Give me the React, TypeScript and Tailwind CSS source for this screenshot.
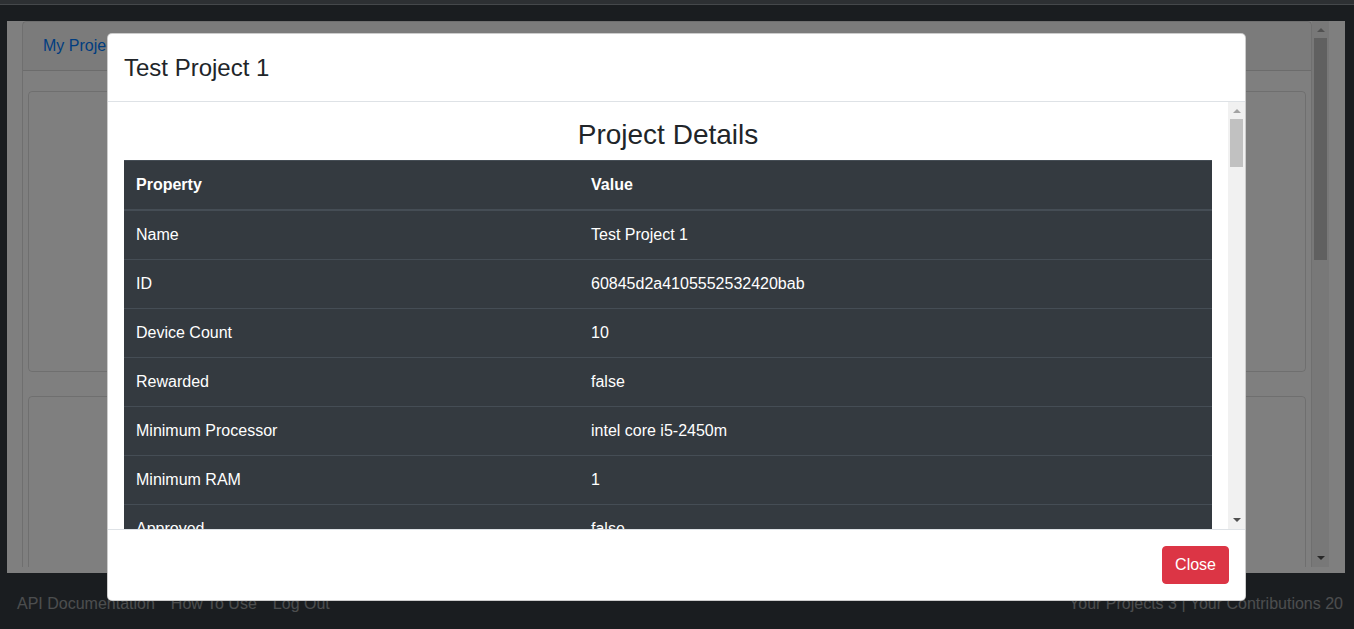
import React from "react";

const details: [string, string][] = [
  ["Name", "Test Project 1"],
  ["ID", "60845d2a4105552532420bab"],
  ["Device Count", "10"],
  ["Rewarded", "false"],
  ["Minimum Processor", "intel core i5-2450m"],
  ["Minimum RAM", "1"],
  ["Approved", "false"],
  ["Minimum Storage", "2"],
  ["Owner", "60845c9e4105552532420baa"],
  ["Created At", "2021-04-24T17:21:14.512Z"],
];

const th = "text-left font-bold px-3 py-3 leading-6 border-t border-b-2 border-[#454d55]";
const td = "px-3 py-3 leading-6 border-t border-[#454d55]";

// classic chrome-style scrollbar, drawn since the headless browser hides real ones
const Scrollbar: React.FC<{ thumbTop: number; thumbHeight: number }> = ({ thumbTop, thumbHeight }) => (
  <div className="w-[17px] shrink-0 bg-[#f1f1f1] flex flex-col">
    <div className="h-[17px] flex items-center justify-center">
      <svg width="8" height="5" viewBox="0 0 8 5"><path d="M0 5 L4 1 L8 5 Z" fill="#a3a3a3" /></svg>
    </div>
    <div className="flex-1 relative">
      <div
        className="absolute left-[2px] right-[2px] bg-[#c1c1c1]"
        style={{ top: thumbTop, height: thumbHeight }}
      />
    </div>
    <div className="h-[17px] flex items-center justify-center">
      <svg width="8" height="5" viewBox="0 0 8 5"><path d="M0 0 L4 4 L8 0 Z" fill="#505050" /></svg>
    </div>
  </div>
);

const App: React.FC = () => {
  return (
    <div className="relative h-[629px] overflow-hidden bg-[#343a40] font-['Liberation_Sans',sans-serif] text-[16px]">
      <div className="h-[4px] bg-[#5a6066]" />
      <div className="h-px bg-[#8a9096]" />

      {/* page content behind the modal */}
      <div className="mt-[16px] ml-[7px] mr-[9px] h-[552px] bg-white pl-[15px] pr-[16px] pb-[6px] flex">
        <div className="flex-1 overflow-hidden">
          <div className="border border-black/[.125] rounded-[4px]">
            <div className="px-5 h-[49px] flex items-center gap-8 border-b border-black/[.125] bg-black/[.03]">
              <span className="text-[#007bff]">My Projects</span>
              <span className="text-[#007bff]">My Contributions</span>
            </div>
            <div className="px-[5px] pt-[20px] pb-[20px] flex flex-col gap-[24px]">
              {[1, 2, 3].map((n) => (
                <div key={n} className="h-[281px] border border-black/[.125] rounded-[4px]" />
              ))}
            </div>
          </div>
        </div>
        <Scrollbar thumbTop={0} thumbHeight={222} />
      </div>

      {/* footer nav */}
      <div className="mt-[19px] pl-[17px] pr-[11px] flex justify-between leading-6 text-white/50">
        <div className="flex gap-4">
          <span>API Documentation</span>
          <span>How To Use</span>
          <span>Log Out</span>
        </div>
        <div>Your Projects 3 | Your Contributions 20</div>
      </div>

      {/* modal */}
      <div className="absolute inset-0 bg-black/50">
        <div className="ml-[107px] mt-[33px] w-[1139px] h-[568px] bg-white border border-black/20 rounded-[5px] flex flex-col text-[#212529]">
          <div className="px-4 h-[68px] flex items-center border-b border-[#dee2e6]">
            <h5 className="text-[24px] leading-[36px] font-medium">Test Project 1</h5>
          </div>

          <div className="flex-1 flex min-h-0">
            <div className="flex-1 overflow-hidden p-4">
              <h3 className="text-center text-[28px] leading-[1.2] font-medium mb-2">Project Details</h3>
              <table className="w-full border-collapse bg-[#343a40] text-white">
                <thead>
                  <tr>
                    <th className={`${th} w-[455px]`}>Property</th>
                    <th className={th}>Value</th>
                  </tr>
                </thead>
                <tbody>
                  {details.map(([k, v]) => (
                    <tr key={k}>
                      <td className={td}>{k}</td>
                      <td className={td}>{v}</td>
                    </tr>
                  ))}
                </tbody>
              </table>
            </div>
            <Scrollbar thumbTop={0} thumbHeight={48} />
          </div>

          <div className="border-t border-[#dee2e6] p-3 flex justify-end">
            <button className="m-1 bg-[#dc3545] text-white px-3 py-[6px] leading-6 rounded-[4px] border border-[#dc3545]">
              Close
            </button>
          </div>
        </div>
      </div>
    </div>
  );
};

export default App;
